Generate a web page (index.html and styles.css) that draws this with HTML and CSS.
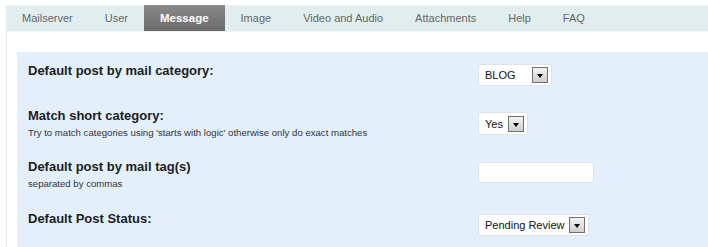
FILE: index.html
```html
<!DOCTYPE html>
<html>
<head>
	<meta charset="utf-8" />
	<title>Postie settings</title>
	<link rel="stylesheet" href="styles.css">
</head>
<body>
	<div class="wrap">
		<ul class="tabs">
			<li>Mailserver</li>
			<li>User</li>
			<li class="active">Message</li>
			<li>Image</li>
			<li>Video and Audio</li>
			<li>Attachments</li>
			<li>Help</li>
			<li>FAQ</li>
		</ul>
		<div class="content">
			<div class="panel">
				<div class="row row1">
					<div class="label">Default post by mail category:</div>
					<div class="field">
						<span class="select"><span class="val w-blog">BLOG</span><span class="btn"></span></span>
					</div>
				</div>
				<div class="row row2">
					<div class="label">Match short category:
						<p class="desc">Try to match categories using 'starts with logic' otherwise only do exact matches</p>
					</div>
					<div class="field">
						<span class="select"><span class="val w-yes">Yes</span><span class="btn"></span></span>
					</div>
				</div>
				<div class="row row3">
					<div class="label">Default post by mail tag(s)
						<p class="desc">separated by commas</p>
					</div>
					<div class="field">
						<input class="text" type="text" value="" />
					</div>
				</div>
				<div class="row row4">
					<div class="label">Default Post Status:</div>
					<div class="field">
						<span class="select"><span class="val w-status">Pending Review</span><span class="btn"></span></span>
					</div>
				</div>
			</div>
		</div>
	</div>
</body>
</html>
```

FILE: styles.css
```css
body{
	margin: 0;
	background: #fff;
	font-family: "Liberation Sans", Arial, sans-serif;
	overflow: hidden;
}
.wrap{
	margin: 5px 0 0 6px;
}
.tabs{
	list-style: none;
	margin: 0;
	padding: 0;
	display: flex;
	height: 26px;
	background: #e2eeee;
	border-top: 1px solid #e9f2f2;
	box-sizing: border-box;
}
.tabs li{
	padding: 0 16px;
	font-size: 11px;
	line-height: 26px;
	color: #666;
	margin-top: -1px;
}
.tabs li.active{
	background: linear-gradient(#888, #6c6c6c);
	color: #fff;
	font-weight: bold;
	font-size: 11.5px;
	height: 26px;
}
.content{
	border-left: 1px solid #e2e2e2;
	border-top: 1px solid #eef4f4;
	padding: 20px 0 0 10px;
	height: 216px;
	box-sizing: border-box;
}
.panel{
	background: #e3f0fc;
	height: 100%;
	padding: 11px 0 0 11px;
	box-sizing: border-box;
}
.row{
	display: grid;
	grid-template-columns: 450px auto;
	align-items: start;
}
.row1{ padding-bottom: 22px; }
.row1 .field{ padding-top: 1px; }
.row2{ padding-bottom: 19px; }
.row2 .field{ padding-top: 4px; }
.row3{ padding-bottom: 20px; }
.row3 .field{ padding-top: 3px; }
.row4 .field{ padding-top: 3px; }
.label{
	font-size: 13px;
	font-weight: bold;
	color: #1d1d1d;
	line-height: 16px;
}
.desc{
	margin: 2px 0 0;
	font-size: 9.6px;
	font-weight: normal;
	color: #333;
	line-height: 14px;
}
.select{
	display: inline-flex;
	align-items: center;
	height: 22px;
	background: #fff;
	border: 1px solid #dde3ea;
	border-radius: 2px;
	box-sizing: border-box;
	padding: 0 3px 0 6px;
	font-size: 11px;
	color: #111;
}
.row2 .select{
	height: 23px;
}
.val{
	margin-right: 6px;
	white-space: nowrap;
}
.w-blog{ width: 41px; }
.w-yes{ width: 17px; }
.w-status{ width: 78px; }
.btn{
	width: 16px;
	height: 16px;
	box-sizing: border-box;
	border: 1px solid #6f6f6f;
	background: linear-gradient(#f4f4f4, #cfcfcf);
	position: relative;
}
.btn:after{
	content: "";
	position: absolute;
	left: 4px;
	top: 6px;
	border-left: 3.5px solid transparent;
	border-right: 3.5px solid transparent;
	border-top: 4px solid #000;
}
.text{
	width: 116px;
	height: 21px;
	box-sizing: border-box;
	border: 1px solid #dde3ea;
	border-radius: 2px;
	background: #fff;
	margin: 0;
	outline: none;
	display: block;
}
```
